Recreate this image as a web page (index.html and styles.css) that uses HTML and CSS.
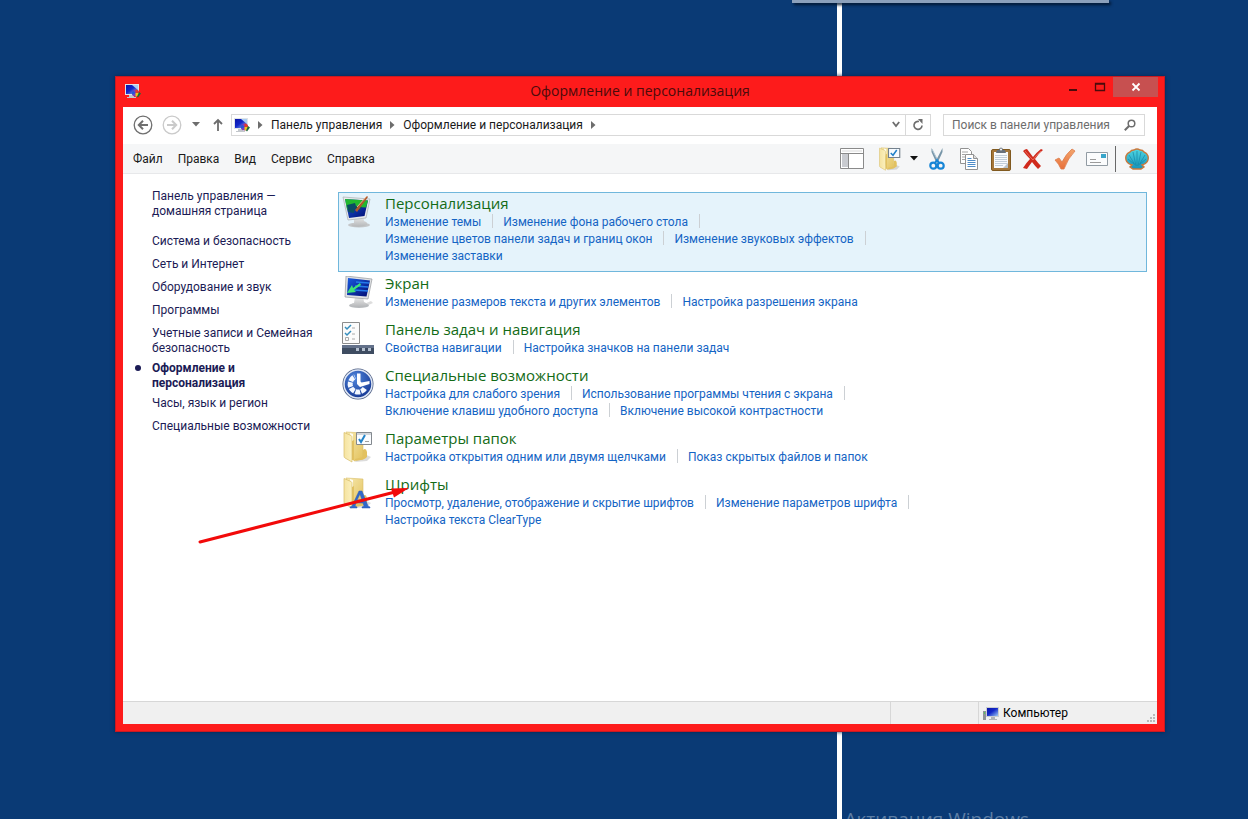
FILE: index.html
```html
<!DOCTYPE html>
<html lang="ru">
<head>
<meta charset="utf-8">
<title>Оформление и персонализация</title>
<link rel="stylesheet" href="styles.css">
</head>
<body>
<svg class="defs" width="0" height="0" aria-hidden="true">
  <defs>
    <linearGradient id="screen" x1="0" y1="0" x2="1" y2="1"><stop offset="0" stop-color="#0a14a8"/><stop offset=".45" stop-color="#1226c8"/><stop offset="1" stop-color="#9cc8f4"/></linearGradient>
    <linearGradient id="deep" x1="0" y1="0" x2="1" y2="1"><stop offset="0" stop-color="#1a5ce0"/><stop offset="1" stop-color="#020a70"/></linearGradient>
    <linearGradient id="silver" x1="0" y1="0" x2="0" y2="1"><stop offset="0" stop-color="#f2f2f2"/><stop offset="1" stop-color="#b4b6b8"/></linearGradient>
    <linearGradient id="fold" x1="0" y1="0" x2="1" y2="0"><stop offset="0" stop-color="#f5e3a0"/><stop offset="1" stop-color="#fbf0bd"/></linearGradient>
    <linearGradient id="inner" x1="0" y1="0" x2="1" y2="1"><stop offset="0" stop-color="#f7e9b0"/><stop offset="1" stop-color="#e3c25c"/></linearGradient>
    <linearGradient id="shell" x1="0" y1="0" x2="0" y2="1"><stop offset="0" stop-color="#4fd6e2"/><stop offset="1" stop-color="#1593bb"/></linearGradient>
    <linearGradient id="tick" x1="0" y1="0" x2="0" y2="1"><stop offset="0" stop-color="#f3a56c"/><stop offset="1" stop-color="#e8703a"/></linearGradient>
    <radialGradient id="ball" cx=".4" cy=".3" r=".8"><stop offset="0" stop-color="#4f86dc"/><stop offset="1" stop-color="#11308c"/></radialGradient>
    <symbol id="panel" viewBox="0 0 16 16">
      <path d="M0 1h14v11H0z" fill="#dfe3e8"/><path d="M1 2h12v9H1z" fill="url(#screen)"/><path d="M7 2h6v5z" fill="#a9cdf2"/>
      <path d="M4 12h5v2h2v1H2v-1h2z" fill="#c3c7cc"/>
      <circle cx="10.500" cy="10" r="3.600" fill="#7a3bc0"/><path d="M10.500 10V6.400a3.600 3.600 0 0 1 3.600 3.600z" fill="#e33a2c"/><path d="M10.500 10h3.600a3.600 3.600 0 0 1-3.600 3.600z" fill="#f3c41c"/><path d="M10.500 10L8 7.500a3.600 3.600 0 0 0-.6 4.300z" fill="#2458d8"/><path d="M14 9l2 1.500-3 4-1-1z" fill="#1e6a3a"/>
    </symbol>
    <symbol id="pc" viewBox="0 0 16 16">
      <path d="M3 1h13v10H3z" fill="#c9cdd2"/><path d="M4 2h11v8H4z" fill="url(#screen)"/><path d="M8 11h4v2h2v1H6v-1h2z" fill="#b0b4b8"/><path d="M0 5h3v9H0z" fill="#8e9398"/><path d="M1 6h1v2H1z" fill="#59c45a"/>
    </symbol>
    <symbol id="folder" viewBox="0 0 32 32">
      <path d="M20 22l9 4-4 4-12 1z" fill="#8a8a8a" opacity=".3"/>
      <path d="M4 1l17 1v26l-9 2z" fill="url(#inner)" stroke="#d9bd68" stroke-width=".6"/>
      <path d="M8 2l3 1v9l-3-1z" fill="#fffdf2"/>
      <path d="M10 29V10l2-1v20zM13 28l8-2v-7q3-3 4 2v5q-4 4-12 3z" fill="#e2c160"/>
      <path d="M2 1.500l7 3q1 .5 1 2V31l-7-4q-1-.5-1-2z" fill="url(#fold)" stroke="#d9bd68" stroke-width=".7"/>
    </symbol>
  </defs>
</svg>
<div class="desktop">
  <div class="stripe"></div>
  <div class="flyout"></div>
  <div class="watermark">Активация Windows</div>
  <div class="window">
    <header class="titlebar">
      <svg class="app-icon" viewBox="0 0 16 16" aria-hidden="true"><use href="#panel"/></svg>
      <h1 class="title">Оформление и персонализация</h1>
      <div class="controls">
        <button class="ctl" aria-label="Свернуть"><svg width="10" height="12" viewBox="0 0 10 12"><path d="M1 8h8v2H1z" fill="#4b0b0b"/></svg></button>
        <button class="ctl" aria-label="Развернуть"><svg width="12" height="12" viewBox="0 0 12 12"><path d="M1.500 2.500h9v7h-9zM1 3h10" fill="none" stroke="#4b0b0b" stroke-width="1.300"/></svg></button>
        <button class="ctl close" aria-label="Закрыть"><svg width="10" height="10" viewBox="0 0 10 10"><path d="M1.500 1.500l7 7m0-7l-7 7" stroke="#fff" stroke-width="1.800"/></svg></button>
      </div>
    </header>
    <div class="client">
      <div class="navbar">
        <button class="nav-btn" aria-label="Назад"><svg width="20" height="20" viewBox="0 0 20 20" fill="none" stroke="#6f6f6f"><circle cx="10" cy="10" r="8.800" stroke-width="1.300"/><path d="M15 10H6m4-4.200L5.800 10l4.200 4.200" stroke-width="2"/></svg></button>
        <button class="nav-btn" aria-label="Вперед"><svg width="20" height="20" viewBox="0 0 20 20" fill="none" stroke="#cacaca"><circle cx="10" cy="10" r="8.800" stroke-width="1.300"/><path d="M5 10h9m-4-4.200l4.200 4.200-4.200 4.200" stroke-width="2"/></svg></button>
        <button class="nav-btn history" aria-label="Последние страницы"><svg width="8" height="5" viewBox="0 0 8 5"><path d="M0 0h8L4 4.500z" fill="#6d6d6d"/></svg></button>
        <button class="nav-btn up" aria-label="Вверх"><svg width="12" height="14" viewBox="0 0 12 14"><path d="M6 13V2M2 6l4-4 4 4" fill="none" stroke="#6d6d6d" stroke-width="1.800"/></svg></button>
        <nav class="address" aria-label="Адрес">
          <svg class="app-icon" viewBox="0 0 16 16" aria-hidden="true"><use href="#panel"/></svg>
          <svg class="chev" viewBox="0 0 5 8"><path d="M0 0l4.500 4L0 8z" fill="#6d6d6d"/></svg>
          <a class="crumb" href="#">Панель управления</a>
          <svg class="chev" viewBox="0 0 5 8"><path d="M0 0l4.500 4L0 8z" fill="#6d6d6d"/></svg>
          <a class="crumb" href="#">Оформление и персонализация</a>
          <svg class="chev" viewBox="0 0 5 8"><path d="M0 0l4.500 4L0 8z" fill="#6d6d6d"/></svg>
          <button class="drop" aria-label="Журнал адресов"><svg width="8" height="7" viewBox="0 0 8 7"><path d="M.8 1l3.200 4 3.200-4" fill="none" stroke="#6d6d6d" stroke-width="1.800"/></svg></button>
          <button class="refresh" aria-label="Обновить"><svg width="12" height="12" viewBox="0 0 12 12"><path d="M7 2.500A4 4 0 1 0 10 6.500" fill="none" stroke="#6d6d6d" stroke-width="1.600"/><path d="M6 0h4.500v5z" fill="#6d6d6d"/></svg></button>
        </nav>
        <form class="search">
          <input class="search-input" type="search" aria-label="Поиск" placeholder="Поиск в панели управления">
          <svg width="12" height="12" viewBox="0 0 12 12" fill="none" stroke="#6d6d6d"><circle cx="7.500" cy="4.500" r="3.300" stroke-width="1.500"/><path d="M5 7L.8 11.200" stroke-width="2"/></svg>
        </form>
      </div>
      <div class="menubar">
        <nav class="menu">
          <button class="menu-item">Файл</button><button class="menu-item">Правка</button><button class="menu-item">Вид</button><button class="menu-item">Сервис</button><button class="menu-item">Справка</button>
        </nav>
        <div class="tools">
          <button class="tool layout" aria-label="Область навигации"><svg width="24" height="22" viewBox="0 0 24 22"><path d="M.5.5h23v20H.5z" fill="#fff" stroke="#8a8a8a"/><path d="M2 6h6v13H2z" fill="#c9cbd0"/><path d="M1 5.500h22M8.500 6v15" stroke="#8a8a8a"/><path d="M2 3h20" stroke="#d9d9d9"/></svg></button>
          <button class="tool" aria-label="Параметры папок"><svg width="24" height="24" viewBox="0 0 32 32"><use href="#folder"/><path d="M14 2h15v12H14z" fill="#f7fbff" stroke="#74818d" stroke-width="1.500"/><path d="M17 8l3 3 5-7" fill="none" stroke="#2180c8" stroke-width="2"/></svg></button>
          <button class="tool narrow" aria-label="Упорядочить"><svg width="8" height="5" viewBox="0 0 8 5"><path d="M0 0h8L4 4.500z" fill="#111"/></svg></button>
          <button class="tool" aria-label="Вырезать"><svg width="16" height="24" viewBox="0 0 16 24"><path d="M2.500 1l7.300 14-2.300 1L2.500 5zM13.500 1L6.200 15l2.300 1 5-11z" fill="#7795a8"/><path d="M3 2l5.500 11" stroke="#b6cbd8"/><circle cx="4.300" cy="18.700" r="3" fill="none" stroke="#1685d6" stroke-width="2.200"/><circle cx="11.700" cy="18.700" r="3" fill="none" stroke="#1685d6" stroke-width="2.200"/><path d="M6 16l2-3 2 3" fill="none" stroke="#1685d6" stroke-width="2"/></svg></button>
          <button class="tool" aria-label="Копировать"><svg width="20" height="24" viewBox="0 0 20 24"><path d="M1.500 1.500h8l3 3v12h-11z" fill="#fff" stroke="#929292"/><path d="M3 5h6M3 7.500h3M3 10h3M3 12.500h3" stroke="#a5a5a5"/><path d="M6.500 7.500h8l4 4v11h-12z" fill="#fff" stroke="#929292"/><path d="M14.500 7.500v4h4" fill="#ddd" stroke="#929292"/><path d="M8.500 11.500h4M8.500 13.500h8M8.500 15.500h8M8.500 17.500h8M8.500 19.500h8" stroke="#4e8cc8"/></svg></button>
          <button class="tool" aria-label="Вставить"><svg width="20" height="24" viewBox="0 0 20 24"><rect x=".5" y="2.500" width="19" height="21" rx="1.500" fill="#a5773a" stroke="#80591f"/><path d="M3 5h14v16H3z" fill="#f8fafc"/><path d="M4 8.500h12M4 10.500h12M4 12.500h12M4 14.500h12M4 16.500h12M4 18.500h8" stroke="#c2ced9"/><path d="M12 21h5v-5z" fill="#b9c3cc"/><path d="M5 6l1-3h2q0-2.500 2-2.500T12 3h2l1 3z" fill="#68717b"/><circle cx="10" cy="2.500" r="1" fill="#fff"/></svg></button>
          <button class="tool" aria-label="Удалить"><svg width="22" height="22" viewBox="0 0 22 22"><path d="M1 3q2-2 4-2 3 4 6 8Q15 4 19 1l2 1q-5 4-8 9 3 4 6 7l-3 3q-3-3-6-7-3 4-5 7l-4-1q3-5 7-9Q4 7 1 3z" fill="#d02a1c"/><path d="M3 3q4 5 8 9 4-6 8-9" fill="none" stroke="#e86a59"/></svg></button>
          <button class="tool" aria-label="Применить"><svg width="22" height="22" viewBox="0 0 22 22"><path d="M1 12l4-2 3 4Q12 6 18 1l3 2Q14 10 10 21H7Q5 16 1 12z" fill="url(#tick)" stroke="#dc7b4b" stroke-width=".8"/></svg></button>
          <button class="tool" aria-label="Отправить"><svg width="22" height="16" viewBox="0 0 22 16"><path d="M.5 1.500h21v13H.5z" fill="#fbfcfd" stroke="#919ba3"/><path d="M15 3h5v4h-5z" fill="#38a5ca"/><path d="M4 8.500h6M4 11.500h11" stroke="#9b9b9b"/></svg></button>
          <span class="tool-sep"></span>
          <button class="tool" aria-label="Оболочка"><svg width="24" height="22" viewBox="0 0 24 22"><path d="M7 17C2 16 0 12 1 8q1-3 4-4 1-2 4-2 3-2 6 0 3 0 4 2 3 1 4 4c1 4-1 8-6 9l2 2-3 2H8l-3-2z" fill="url(#shell)" stroke="#c9793c" stroke-width="1.400"/><path d="M12 18V3M11 18L8 4M13 18l3-14M10 17L4 7M14 17l6-10M9 16l-6-5M15 16l6-5" stroke="#1789a8" stroke-width=".7"/></svg></button>
        </div>
      </div>
      <div class="content">
        <nav class="sidebar">
          <a class="side-link home" href="#">Панель управления — домашняя страница</a>
          <a class="side-link" href="#">Система и безопасность</a>
          <a class="side-link" href="#">Сеть и Интернет</a>
          <a class="side-link" href="#">Оборудование и звук</a>
          <a class="side-link" href="#">Программы</a>
          <a class="side-link before-active" href="#">Учетные записи и Семейная безопасность</a>
          <a class="side-link active" href="#" aria-current="page">Оформление и персонализация</a>
          <a class="side-link" href="#">Часы, язык и регион</a>
          <a class="side-link" href="#">Специальные возможности</a>
        </nav>
        <main class="categories">
          <section class="category selected">
            <svg class="cat-icon" viewBox="0 0 32 32"><ellipse cx="17" cy="29" rx="11" ry="2.500" fill="#c4c7c9"/><path d="M12 21l9-2 1 6q4 1 3 4-7 3-15 1-2-2 2-3z" fill="url(#silver)"/><path d="M1 1l27 2-4 19-18 2z" fill="#e9eaec" stroke="#a9adb1" stroke-width=".7"/><path d="M3 3l23 1.500L22.500 20 7 22z" fill="url(#deep)"/><path d="M3 3l23 1.500-2 7q-9-1-19 2z" fill="#23b82f"/><path d="M5 9l8-2 1 3 6 1-2 3-5-1-1 4-6-1z" fill="#0b4c64"/><path d="M13 14L25 0l1 1-11 15z" fill="#b0562b"/><path d="M15 11l9-10" stroke="#e8b189"/></svg>
            <div class="cat-body"><h2 class="cat-title"><a href="#">Персонализация</a></h2>
            <ul class="tasks"><li><a href="#">Изменение темы</a></li><li><a href="#">Изменение фона рабочего стола</a></li><li><a href="#">Изменение цветов панели задач и границ окон</a></li><li><a href="#">Изменение звуковых эффектов</a></li><li><a href="#">Изменение заставки</a></li></ul></div>
          </section>
          <section class="category">
            <svg class="cat-icon" viewBox="0 0 32 32"><path d="M22 28l7-3 2 2-9 4z" fill="#ddd"/><ellipse cx="17" cy="29.500" rx="10" ry="2.500" fill="#b8bbbe"/><path d="M13 21l8-1 1 6q4 1 2 4-7 2-15 0-1-2 3-3z" fill="url(#silver)"/><path d="M4 0l26 3-4 20-23-2z" fill="#dfe1e4" stroke="#96999d" stroke-width=".7"/><path d="M6 2l22 2.500-3.500 16L5 19z" fill="url(#deep)"/><path d="M14 6l13 1M13 10l13 1M12 14l14 1" stroke="#257bea" stroke-width="1.500"/><path d="M18 7l-7 5-1-3-5 8 9-1-2-2 7-5z" fill="#3ee477"/></svg>
            <div class="cat-body"><h2 class="cat-title"><a href="#">Экран</a></h2>
            <ul class="tasks"><li><a href="#">Изменение размеров текста и других элементов</a></li><li><a href="#">Настройка разрешения экрана</a></li></ul></div>
          </section>
          <section class="category">
            <svg class="cat-icon" viewBox="0 0 32 32"><path d="M.5.500h17v21H.5z" fill="#fbfbfb" stroke="#8c8c8c"/><path d="M3 5l2 2 4-4M3 11l2 2 4-4" fill="none" stroke="#368ebd" stroke-width="1.500"/><path d="M3.500 15.500h3v3h-3zM10 6h3M10 12h3M10 17h3" fill="none" stroke="#aaa"/><path d="M0 23h32v9H0z" fill="#3e4c61"/><path d="M0 23h32v3H0z" fill="#63718a"/><path d="M14 26h3v3h-3zM20 26h3v3h-3zM26 26h3v3h-3z" fill="#b5c0cf"/></svg>
            <div class="cat-body"><h2 class="cat-title"><a href="#">Панель задач и навигация</a></h2>
            <ul class="tasks"><li><a href="#">Свойства навигации</a></li><li><a href="#">Настройка значков на панели задач</a></li></ul></div>
          </section>
          <section class="category">
            <svg class="cat-icon" viewBox="0 0 32 32"><circle cx="16" cy="16" r="15.500" fill="#4d5e83"/><circle cx="16" cy="16" r="14" fill="url(#ball)" stroke="#dfe7f5" stroke-width="1.500"/><path d="M22.800 20.500A8 8 0 1 1 13 8.700" fill="none" stroke="#f4f8ff" stroke-width="5" stroke-dasharray="4.800 1"/><path d="M15 5.500h3.500v8l1 1 8-1.500v3L18 19l-3-3z" fill="#fff"/></svg>
            <div class="cat-body"><h2 class="cat-title"><a href="#">Специальные возможности</a></h2>
            <ul class="tasks"><li><a href="#">Настройка для слабого зрения</a></li><li><a href="#">Использование программы чтения с экрана</a></li><li><a href="#">Включение клавиш удобного доступа</a></li><li><a href="#">Включение высокой контрастности</a></li></ul></div>
          </section>
          <section class="category">
            <svg class="cat-icon" viewBox="0 0 32 32"><use href="#folder"/><path d="M14.500 1.500h15v12h-15z" fill="#fafcff" stroke="#83898f"/><path d="M15 3h14" stroke="#a9afb5"/><path d="M17 8l2 3 4-7" fill="none" stroke="#2484c9" stroke-width="2"/><path d="M23 10.500h4" stroke="#a0a0a0"/></svg>
            <div class="cat-body"><h2 class="cat-title"><a href="#">Параметры папок</a></h2>
            <ul class="tasks"><li><a href="#">Настройка открытия одним или двумя щелчками</a></li><li><a href="#">Показ скрытых файлов и папок</a></li></ul></div>
          </section>
          <section class="category">
            <svg class="cat-icon" viewBox="0 0 32 32"><use href="#folder"/><path d="M8 31v-1l2-1 7-15h3l6 15 2 1v1h-8v-1l2-1-1-3h-7l-1 3 2 1v1zM15 23h5l-2-6z" fill="#2f68ca" stroke="#2f5bb4" stroke-width=".5"/></svg>
            <div class="cat-body"><h2 class="cat-title"><a href="#">Шрифты</a></h2>
            <ul class="tasks"><li><a href="#">Просмотр, удаление, отображение и скрытие шрифтов</a></li><li><a href="#">Изменение параметров шрифта</a></li><li><a href="#">Настройка текста ClearType</a></li></ul></div>
          </section>
        </main>
      </div>
      <footer class="statusbar">
        <span class="status-cell"></span><span class="status-cell"></span>
        <span class="status-cell"><svg class="app-icon" viewBox="0 0 16 16"><use href="#pc"/></svg>Компьютер</span>
        <svg class="grip" width="9" height="9" viewBox="0 0 9 9"><path d="M6 0h2v2H6zM3 3h2v2H3zM6 3h2v2H6zM0 6h2v2H0zM3 6h2v2H3zM6 6h2v2H6z" fill="#b9b9b9"/></svg>
      </footer>
    </div>
    <svg class="pointer" width="214" height="62" viewBox="0 0 214 62" aria-hidden="true"><path d="M3 58L198 8" stroke="#f20a0a" stroke-width="3" stroke-linecap="round"/><path d="M212 4l-18 .5 3 9z" fill="#f20a0a"/></svg>
  </div>
</div>
</body>
</html>
```
FILE: styles.css
```css
* { box-sizing: border-box; }

body {
  margin: 0;
  font: 12px/15px Roboto, "Open Sans", sans-serif;
  color: #1a1a1a;
}

button {
  display: flex;
  align-items: center;
  justify-content: center;
  padding: 0;
  border: 0;
  background: none;
  font: inherit;
  color: inherit;
}

a { color: inherit; text-decoration: none; }
a:hover { text-decoration: underline; }
svg { flex: none; }
.defs { position: absolute; }

.desktop {
  position: relative;
  display: flex;
  min-height: 100vh;
  padding: 76px 83px 87px 115px;
  background: #0a3a75;
  overflow: hidden;
}

.stripe {
  position: absolute;
  top: 0;
  bottom: 0;
  right: 406px;
  width: 5px;
  background: #fff;
}

.flyout {
  position: absolute;
  top: 0;
  right: 139px;
  width: 317px;
  height: 3px;
  background: #8ba0bc;
  box-shadow: 2px 2px 3px #02152f;
}

.watermark {
  position: absolute;
  right: 219px;
  bottom: -14px;
  font-family: "Open Sans", sans-serif;
  font-size: 19px;
  line-height: 27px;
  color: #5d7ea5;
  white-space: nowrap;
}

.window {
  position: relative;
  flex: 1;
  display: flex;
  flex-direction: column;
  min-width: 0;
  padding: 0 7px 7px;
  border: 1px solid #c91a22;
  background: #fd1b1b;
  box-shadow: 0 0 4px #06264f;
}

.titlebar {
  display: grid;
  grid-template-columns: 99px 1fr 99px;
  height: 30px;
  padding-bottom: 2px;
  align-items: center;
}

.app-icon { width: 16px; height: 16px; }
.titlebar .app-icon { margin-left: 2px; }

.title {
  margin: 0;
  font-family: "Open Sans", sans-serif;
  font-size: 14px;
  line-height: 20px;
  font-weight: 400;
  text-align: center;
  color: #4b0b0b;
}

.controls { display: flex; align-self: start; justify-content: flex-end; margin-right: -1px; }
.ctl { width: 27px; height: 20px; }
.close { width: 45px; background: #c75050; }

.client {
  flex: 1;
  display: flex;
  flex-direction: column;
  background: #fff;
}

.navbar {
  display: flex;
  align-items: center;
  height: 37px;
  padding: 0 12px 2px 9px;
}

.nav-btn { width: 22px; height: 22px; margin-right: 7px; }
.history { width: 16px; margin: 0 7px 0 -2px; }
.up { width: 14px; margin-right: 6px; }

.address {
  flex: 1;
  display: flex;
  align-items: center;
  height: 22px;
  padding-left: 2px;
  border: 1px solid #d9d9d9;
}

.crumb { padding-top: 2px; }
.chev { width: 5px; height: 8px; margin: 0 8px; }
.drop { width: 18px; height: 20px; margin-left: auto; }
.refresh { width: 25px; height: 20px; border-left: 1px solid #d9d9d9; }

.search {
  display: flex;
  align-items: center;
  width: 202px;
  height: 22px;
  margin-left: 12px;
  padding: 0 8px;
  border: 1px solid #d9d9d9;
}

.search-input {
  flex: 1;
  min-width: 0;
  padding: 2px 0 0;
  border: 0;
  outline: 0;
  background: none;
  font: inherit;
}
.search-input::placeholder { color: #6d6d6d; }

.menubar {
  display: flex;
  align-items: center;
  justify-content: space-between;
  height: 30px;
  padding: 0 4px 0 10px;
  border-bottom: 1px solid #e7e8ea;
  background: #f5f6f7;
}

.menu { display: flex; gap: 15px; padding-top: 2px; }
.tools { display: flex; align-items: center; }
.tool { width: 32px; height: 28px; }
.layout { margin-right: 6px; }
.narrow { width: 15px; }
.tool-sep { width: 1px; height: 26px; margin: 0 5px 0 2px; background: #686868; }

.content {
  flex: 1;
  display: grid;
  grid-template-columns: 186px 1fr;
  padding: 15px 10px 15px 29px;
}

.sidebar {
  display: flex;
  flex-direction: column;
  width: 165px;
  color: #1b1b55;
}

.side-link { margin-bottom: 8px; }
.home { margin-bottom: 15px; }
.before-active { margin-bottom: 5px; }
.active { position: relative; margin-bottom: 5px; font-weight: 700; }
.active::before {
  content: "";
  position: absolute;
  left: -17px;
  top: 4px;
  width: 6px;
  height: 6px;
  border-radius: 50%;
  background: #1b1b55;
}

.categories { padding-top: 3px; }

.category {
  display: flex;
  gap: 11px;
  padding: 0 3px 6px;
  border: 1px solid transparent;
}
.selected { border-color: #70b7dc; background: #e5f3fb; }

.cat-icon { width: 32px; height: 32px; margin: 3px 0 -7px; }
.cat-title { margin: 0; font: 400 15px/20px "Open Sans", sans-serif; color: #136b16; }

.tasks {
  display: flex;
  flex-wrap: wrap;
  max-width: 560px;
  margin: 0;
  padding: 1px 0 0;
  list-style: none;
  line-height: 17px;
  color: #1464c4;
}
.tasks li { display: flex; margin-right: 10px; }
.tasks li:not(:last-child)::after {
  content: "";
  width: 1px;
  height: 14px;
  margin-left: 11px;
  background: #ccd0d4;
}

.statusbar {
  position: relative;
  display: grid;
  grid-template-columns: 1fr 88px 179px;
  height: 23px;
  border-top: 1px solid #d7d7d7;
  background: #f0f0f0;
  color: #000;
}
.status-cell { display: flex; align-items: center; gap: 4px; padding: 1px 0 0 4px; }
.status-cell + .status-cell { border-left: 1px solid #d7d7d7; }
.grip { position: absolute; right: 1px; bottom: 1px; }

.pointer { position: absolute; left: 81px; top: 407px; }
```
